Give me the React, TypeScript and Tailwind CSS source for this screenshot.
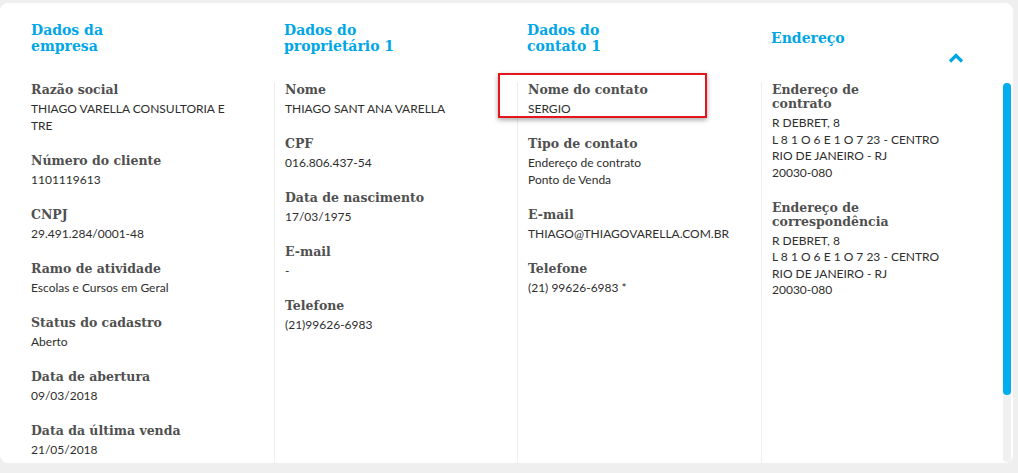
import React from "react";

type Field = { label: string; lines: string[]; highlight?: boolean };

type Column = { title: string[]; fields: Field[] };

const columns: Column[] = [
  {
    title: ["Dados da", "empresa"],
    fields: [
      { label: "Razão social", lines: ["THIAGO VARELLA CONSULTORIA E", "TRE"] },
      { label: "Número do cliente", lines: ["1101119613"] },
      { label: "CNPJ", lines: ["29.491.284/0001-48"] },
      { label: "Ramo de atividade", lines: ["Escolas e Cursos em Geral"] },
      { label: "Status do cadastro", lines: ["Aberto"] },
      { label: "Data de abertura", lines: ["09/03/2018"] },
      { label: "Data da última venda", lines: ["21/05/2018"] },
    ],
  },
  {
    title: ["Dados do", "proprietário 1"],
    fields: [
      { label: "Nome", lines: ["THIAGO SANT ANA VARELLA"] },
      { label: "CPF", lines: ["016.806.437-54"] },
      { label: "Data de nascimento", lines: ["17/03/1975"] },
      { label: "E-mail", lines: ["-"] },
      { label: "Telefone", lines: ["(21)99626-6983"] },
    ],
  },
  {
    title: ["Dados do", "contato 1"],
    fields: [
      { label: "Nome do contato", lines: ["SERGIO"], highlight: true },
      { label: "Tipo de contato", lines: ["Endereço de contrato", "Ponto de Venda"] },
      { label: "E-mail", lines: ["THIAGO@THIAGOVARELLA.COM.BR"] },
      { label: "Telefone", lines: ["(21) 99626-6983 *"] },
    ],
  },
  {
    title: ["Endereço"],
    fields: [
      {
        label: "Endereço de contrato",
        lines: ["R DEBRET, 8", "L 8 1 O 6 E 1 O 7 23 - CENTRO", "RIO DE JANEIRO - RJ", "20030-080"],
      },
      {
        label: "Endereço de correspondência",
        lines: ["R DEBRET, 8", "L 8 1 O 6 E 1 O 7 23 - CENTRO", "RIO DE JANEIRO - RJ", "20030-080"],
      },
    ],
  },
];

const slab = "font-['DejaVu_Serif',serif] font-bold";
const sans = "font-['Lato','Open_Sans',sans-serif]";

const InfoField = ({ label, lines, highlight, narrow }: Field & { narrow?: boolean }) => (
  <div className="relative mb-[19.5px]">
    {highlight && (
      <div className="absolute -left-[30px] -top-[10px] w-[209px] h-[45px] border-2 border-[#e3161d] shadow-[0_2px_5px_rgba(0,0,0,0.35)] pointer-events-none" />
    )}
    <div
      className={`${slab} text-[12.5px] leading-[14px] text-[#505050] mb-[4px] ${narrow ? "max-w-[120px]" : ""}`}
    >
      {label}
    </div>
    {lines.map((l, i) => (
      <div key={i} className={`${sans} text-[12px] leading-[16.5px] text-[#2e2e2e]`}>
        {l}
      </div>
    ))}
  </div>
);

export default function App() {
  return (
    <div className="w-[1018px] h-[473px] bg-[#efefef] pt-[3px] pr-[5px] overflow-hidden">
      <div className="h-[460px] bg-white rounded-[8px] flex overflow-hidden">
        {columns.map((col, ci) => (
          <div
            key={ci}
            className={`flex flex-col shrink-0 ${ci === 0 ? "w-[274px]" : ci === 3 ? "w-[242px]" : ci === 1 ? "w-[243px]" : "w-[244px]"}`}
          >
            <div className={`shrink-0 h-[79px] pt-[19px] ${ci === 0 ? "pl-[31px]" : "pl-[10px]"}`}>
              <div className={`h-[32px] flex flex-col justify-center ${slab} text-[14px] leading-[16px] text-[#00a6e6]`}>
                {col.title.map((t, i) => (
                  <div key={i}>{t}</div>
                ))}
              </div>
              {ci === 3 && (
                <div className="flex justify-end pr-[39px] -mt-[1px]">
                  <svg width="16" height="10" viewBox="0 0 16 10">
                    <polyline points="2,8.5 8,2.5 14,8.5" fill="none" stroke="#00a6e6" strokeWidth="3.2" />
                  </svg>
                </div>
              )}
            </div>
            <div
              className={`flex-1 ${ci === 0 ? "pl-[31px]" : "pl-[10px] border-l border-[#eeeeee]"} pt-[1px]`}
            >
              {col.fields.map((f, fi) => (
                <InfoField key={fi} {...f} narrow={ci === 3} />
              ))}
            </div>
          </div>
        ))}
        <div className="flex flex-col pt-[80px] pb-[1px] w-[8px]">
          <div className="flex-1 rounded-full bg-[#f0f0f0] flex flex-col">
            <div className="h-[312px] rounded-full bg-[#00aeef]" />
          </div>
        </div>
      </div>
    </div>
  );
}
